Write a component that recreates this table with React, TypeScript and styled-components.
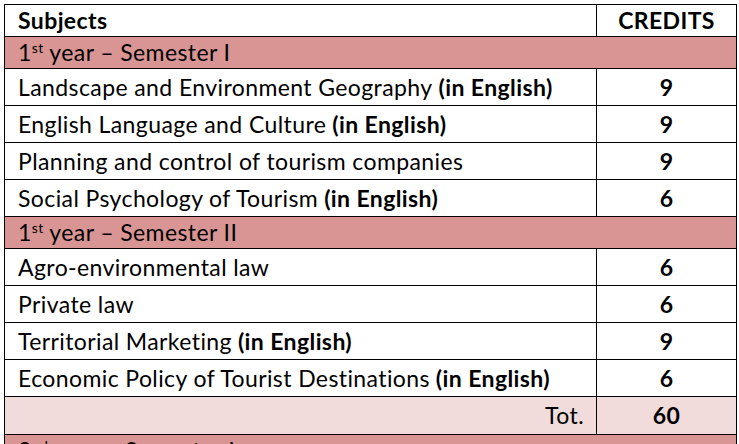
import React from 'react';
import styled, { createGlobalStyle, css } from 'styled-components';

const GlobalStyle = createGlobalStyle`
    html, body {
        margin: 0;
        padding: 0;
        background: #ffffff;
        overflow: hidden;
    }
    body {
        font-family: Lato, "Open Sans", sans-serif;
        color: #000000;
    }
`;

type RowKind = 'head' | 'semester' | 'course' | 'total';

interface Course {
    name: string;
    english?: boolean;
    credits: number;
}

const semesterOne: Course[] = [
    { name: 'Landscape and Environment Geography', english: true, credits: 9 },
    { name: 'English Language and Culture', english: true, credits: 9 },
    { name: 'Planning and control of tourism companies', credits: 9 },
    { name: 'Social Psychology of Tourism', english: true, credits: 6 },
];

const semesterTwo: Course[] = [
    { name: 'Agro-environmental law', credits: 6 },
    { name: 'Private law', credits: 6 },
    { name: 'Territorial Marketing', english: true, credits: 9 },
    { name: 'Economic Policy of Tourist Destinations', english: true, credits: 6 },
];

const SemesterRow = ({ year, suffix, label }: { year: number; suffix: string; label: string }) => (
    <S_Row kind="semester">
        <S_Cell kind="semester" colSpan={2}>
            {year}
            <sup>{suffix}</sup> year – Semester {label}
        </S_Cell>
    </S_Row>
);

const CourseRow = ({ course }: { course: Course }) => (
    <S_Row kind="course">
        <S_Cell kind="course">
            {course.name}
            {course.english && <S_Bold> (in English)</S_Bold>}
        </S_Cell>
        <S_Credit>{course.credits}</S_Credit>
    </S_Row>
);

export default function App(): JSX.Element {
    const total = [...semesterOne, ...semesterTwo].reduce((sum, c) => sum + c.credits, 0);
    return (
        <>
            <GlobalStyle />
            <S_Table>
                <colgroup>
                    <col style={{ width: 592 }} />
                    <col style={{ width: 140 }} />
                </colgroup>
                <tbody>
                    <S_Row kind="head">
                        <S_Cell kind="head">Subjects</S_Cell>
                        <S_Credit>CREDITS</S_Credit>
                    </S_Row>
                    <SemesterRow year={1} suffix="st" label="I" />
                    {semesterOne.map((c) => (
                        <CourseRow key={c.name} course={c} />
                    ))}
                    <SemesterRow year={1} suffix="st" label="II" />
                    {semesterTwo.map((c) => (
                        <CourseRow key={c.name} course={c} />
                    ))}
                    <S_Row kind="total">
                        <S_Cell kind="total">Tot.</S_Cell>
                        <S_Credit>{total}</S_Credit>
                    </S_Row>
                    <SemesterRow year={2} suffix="nd" label="I" />
                </tbody>
            </S_Table>
        </>
    );
}

const S_Table = styled.table`
    margin: 4px 0 0 4px;
    width: 732px;
    table-layout: fixed;
    border-collapse: collapse;
    font-size: 23px;
    letter-spacing: 0.4px;
    line-height: 1;
`;

const S_Row = styled.tr<{ kind: RowKind }>`
    ${(props) => {
        switch (props.kind) {
            case 'head':
                return css`
                    height: 32px;
                    background: #ffffff;
                `;
            case 'semester':
                return css`
                    height: 32px;
                    background: #d99594;
                `;
            case 'total':
                return css`
                    height: 38px;
                    background: #f2dbdb;
                `;
            default:
                return css`
                    height: 37px;
                    background: #ffffff;
                `;
        }
    }}
`;

const S_Cell = styled.td<{ kind: RowKind }>`
    border: 1px solid #000000;
    padding: 0 12px 0 13px;
    white-space: nowrap;
    overflow: hidden;
    vertical-align: middle;
    font-weight: ${(props) => (props.kind === 'head' ? 700 : 400)};
    text-align: ${(props) => (props.kind === 'total' ? 'right' : 'left')};

    sup {
        font-size: 14px;
        line-height: 0;
        vertical-align: 8px;
    }
`;

const S_Credit = styled.td`
    border: 1px solid #000000;
    padding: 0;
    text-align: center;
    vertical-align: middle;
    font-weight: 700;
`;

const S_Bold = styled.span`
    font-weight: 700;
`;
